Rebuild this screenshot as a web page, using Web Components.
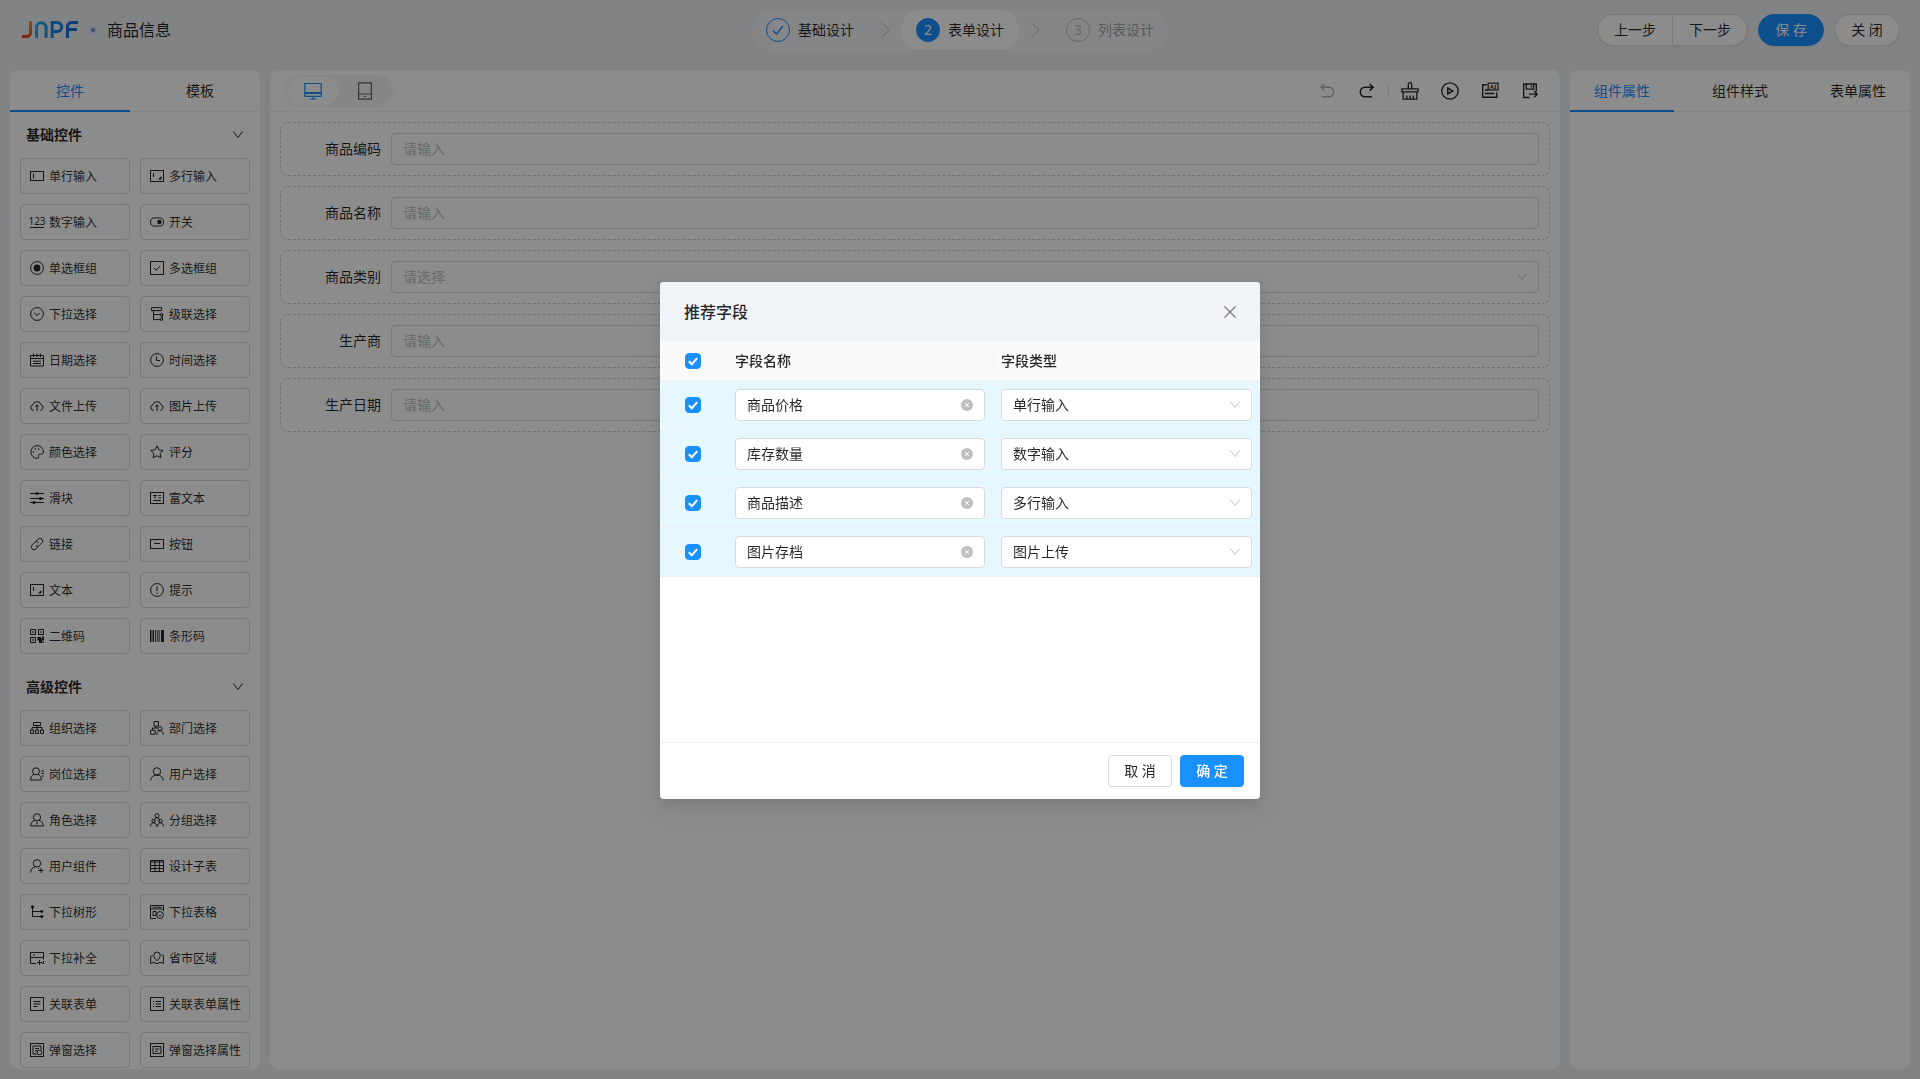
<!DOCTYPE html>
<html lang="zh-CN">
<head>
<meta charset="utf-8">
<title>商品信息</title>
<style>
  html, body { margin: 0; height: 100%; }
  body {
    --primary: #1890ff;
    --line: #d9d9d9;
    --split: #f0f0f0;
    --text: rgba(0, 0, 0, .85);
    --hint: #bfbfbf;
    --page: #ebeef2;
    font: 14px/22px "Noto Sans", "Noto Sans CJK SC", sans-serif;
    color: var(--text);
    background: var(--page);
    overflow: hidden;
  }
</style>
</head>
<body>
<design-app></design-app>

<script>
const define = (name, cls) => customElements.define(name, cls);

class Base extends HTMLElement {
  connectedCallback() {
    if (this.shadowRoot) return;
    const root = this.attachShadow({ mode: 'open' });
    root.innerHTML = `<style>
      *, ::before, ::after { box-sizing: border-box; }
      button, input, select { font: inherit; color: inherit; margin: 0; border-radius: 0; letter-spacing: normal; }
      button { cursor: pointer; background: none; border: 0; padding: 0; white-space: nowrap; }
      ${this.css()}
    </style>${this.html()}`;
  }
  css() { return ''; }
  html() { return ''; }
}

/* ---------- icons: [viewBox size, markup] ---------- */
const DOT = 'fill="currentColor" stroke="none"';
const ICONS = {
  input: [14, '<rect x=".5" y="2.5" width="13" height="9"/><path d="M3.5 4.5v5"/>'],
  textarea: [14, `<rect x=".5" y="1.5" width="13" height="11"/><path d="M3.5 4v4"/><path ${DOT} d="M11.5 7v3.5H8z"/>`],
  number: [14, '<text x="7" y="9.5" text-anchor="middle" font-size="10" fill="currentColor" stroke="none" font-family="Liberation Sans Narrow, Noto Sans">123</text><path d="M0 12.5h14"/>'],
  toggle: [14, `<rect x=".5" y="2.9" width="13" height="8.2" rx="4.1"/><circle cx="9.4" cy="7" r="2.2" ${DOT}/>`],
  radio: [14, `<circle cx="7" cy="7" r="6.4"/><circle cx="7" cy="7" r="3.4" ${DOT}/>`],
  checkbox: [14, '<rect x=".5" y=".5" width="13" height="13"/><path d="M4 7l2.2 2.2L10.2 5"/>'],
  select: [14, '<circle cx="7" cy="7" r="6.4"/><path d="M4.2 5.8L7 8.6l2.8-2.8"/>'],
  cascade: [14, `<path d="M1.5.6h10v3h-10zM3.5 3.6v9h7M3.5 7.6h7M12.4 7v5.5"/><circle cx="11.4" cy="7.6" r="1.3"/><circle cx="11.4" cy="12.2" r="1.3"/>`],
  date: [14, '<path d="M.5 2.5h13v10.500H.5zM.5 5.500h13M3.500.5v3.500M7 .5v3.500M10.500 .5v3.500M3 8.200h8M3 10.500h8"/>'],
  time: [14, '<circle cx="7" cy="7" r="6.4"/><path d="M6.500 3.300v4.200h3.500"/>'],
  upload: [14, '<path d="M4 11.300H3.300A2.800 2.800 0 0 1 2.900 5.800 4.200 4.200 0 0 1 11 5.700a2.900 2.900 0 0 1-.4 5.600H10M7 12V6M5.200 7.600L7 5.800l1.800 1.800"/>'],
  palette: [14, `<path d="M7 .6a6.400 6.400 0 1 0 .6 12.800c1.500-.2.800-1.700.7-2.600-.1-1.300 1.100-1.900 2.500-1.700 1.500.2 2.600-.3 2.600-2.100A6.400 6.400 0 0 0 7 .6z"/><circle cx="3.400" cy="7" r=".8" ${DOT}/><circle cx="5.200" cy="4" r=".8" ${DOT}/><circle cx="8.800" cy="4" r=".8" ${DOT}/>`],
  star: [14, '<path d="M7 .9l1.900 3.900 4.300.6-3.100 3 .7 4.300L7 10.700l-3.800 2 .7-4.300-3.100-3 4.300-.6z"/>'],
  slider: [14, `<path d="M0 2.500h14M0 7.500h14M0 11.500h14"/><circle cx="7" cy="2.500" r="1.600" ${DOT}/><circle cx="10.500" cy="7.500" r="1.600" ${DOT}/><circle cx="4" cy="11.500" r="1.600" ${DOT}/>`],
  rich: [14, '<rect x=".5" y="1.500" width="13" height="11"/><path d="M3 4.500h4M5 4.500v3M8.500 4.500H11M8.500 6.800H11M3 9.500h8"/>'],
  link: [14, '<path d="M6 4.200l2.300-2.300a2.700 2.700 0 0 1 3.800 3.800L9.300 8.500a2.700 2.700 0 0 1-3.600.2M8 9.800l-2.300 2.300a2.700 2.700 0 0 1-3.800-3.800L4.700 5.500a2.700 2.700 0 0 1 3.600-.2"/>'],
  button: [14, '<rect x=".5" y="2.500" width="13" height="9"/><path d="M4 6.500h6"/>'],
  alert: [14, `<circle cx="7" cy="7" r="6.400"/><path d="M7 3.300v5"/><circle cx="7" cy="10.200" r=".7" ${DOT}/>`],
  qr: [14, `<path d="M.5.5h5v5h-5zM8.500.5h5v5h-5zM.5 8.500h5v5h-5z"/><path ${DOT} d="M2.300 2.300h1.500v1.500H2.300zM10.300 2.300h1.500v1.500h-1.500zM2.300 10.300h1.500v1.500H2.300zM7.500 8h3.500v3.500H7.500zM11 9.500h1V7.500h2V11.500h-3zM9 11h3v3H9zM12.500 12.500H14V14h-1.500z"/>`],
  barcode: [14, `<path ${DOT} d="M0 1h1.500v12H0zM2.500 1H4v12H2.500zM5 1h.8v12H5zM6.800 1h.8v12h-.8zM8.600 1h1v12h-1zM11 1h3v12h-3z"/>`],
  org: [14, '<path d="M3.500 1.500h7v3h-7zM7 4.500V9M2 9V6.500h10V9M.5 9h3v3.500h-3zM5.500 9h3v3.500h-3zM10.500 9h3v3.500h-3z"/>'],
  dept: [14, '<path d="M4 .6h4.500v4.500H4zM6 5.100v2M2.500 9V7h5M.6 9.200h4.600v4H.6z"/><circle cx="10" cy="7.600" r="2"/><path d="M6.900 13.600c0-2.500 1.200-3.900 3.100-3.900s3.300 1.400 3.300 3.900"/>'],
  post: [14, '<circle cx="6" cy="4.300" r="3.500"/><path d="M4 7.300C1.800 8.400.6 10.200.6 13h10.800c0-2.800-1-4.600-3.200-5.700M11 4h3M11.500 6.500H14M12 9h2"/>'],
  user: [14, '<circle cx="7" cy="4.400" r="3.700"/><path d="M.7 13.500C1 9.900 3.300 8.100 7 8.100s6 1.800 6.300 5.400"/>'],
  role: [14, '<circle cx="7" cy="4.300" r="3.600"/><path d="M4.800 7.400C2 8.300.7 10.300.7 13h12.600c0-2.700-1.300-4.700-4.100-5.600M7 9v2.500"/>'],
  group: [14, '<circle cx="7" cy="2.700" r="2.100"/><path d="M4.500 7.500C4.500 5.700 5.500 4.800 7 4.800s2.500.9 2.500 2.700"/><circle cx="3.500" cy="8" r="1.700"/><circle cx="10.500" cy="8" r="1.700"/><path d="M.6 13.500c0-2.400 1.100-3.700 2.900-3.700s2.900 1.300 2.900 3.700M7.600 13.500c0-2.400 1.100-3.700 2.900-3.700s2.900 1.300 2.900 3.700"/>'],
  useradd: [14, '<circle cx="7" cy="4.300" r="3.700"/><path d="M.7 13.500C.9 10.500 2.300 8.600 5 8M8 9.200h1M11 9v5M8.500 11.500h5"/>'],
  table: [14, '<path d="M.5 1.500h13v11H.5zM.5 3h13M.5 6.500h13M.5 9.500h13M5 2v10.500M9.500 2v10.500"/>'],
  tree: [14, `<path d="M2.500 2v9.500H12M2.500 6.500H12"/><circle cx="2.500" cy="1.800" r="1.600" ${DOT}/><circle cx="11.800" cy="6.500" r="1.400" ${DOT}/><circle cx="11.800" cy="11.500" r="1.600" ${DOT}/>`],
  poptable: [14, '<path d="M13.500 6V.5H.5v13H6M.5 4h13M3 6.500h3v4H3zM2.500 2.300h9"/><circle cx="10" cy="10" r="3.400"/><path d="M8.500 9.600l1.500 1.500 1.500-1.500"/>'],
  complete: [14, '<path d="M13.500 6.500v-5H.5v5h13M.5 6.500v6H6M3 4h2M9.500 9v5M7 11.500h5M13.500 6.500v2M12 12.500h1.500V10"/>'],
  area: [14, '<path d="M7 9.800C4.800 7.600 3.800 6 3.800 4.200a3.200 3.200 0 0 1 6.400 0C10.200 6 9.200 7.600 7 9.800zM2.800 4.500L.6 5.500v7l3.400-1.200 3 1.600 3-1.600 3.400 1.200v-8l-2-.8"/>'],
  relform: [14, '<rect x=".5" y=".5" width="13" height="13"/><path d="M3.500 4.500h7M3.500 7h7M3.500 9.500h4"/>'],
  relattr: [14, '<rect x=".5" y=".5" width="13" height="13"/><path d="M3 4.500h1M5.500 4.500H11M3 7h1M5.500 7H11M3 9.500h1M5.500 9.500H11"/>'],
  popup: [14, '<rect x=".5" y=".5" width="13" height="13"/><path d="M11 7V3H3v8h4M5 5.500h4M5 7.800h2.500"/><circle cx="9.500" cy="9.500" r="2.300"/>'],
  popattr: [14, '<rect x=".5" y=".5" width="13" height="13"/><path d="M3 3.500h8v7H3zM5 6h4.500M5 8.300h2.500"/>'],
  down: [12, '<path d="M1.300 2.500L6 8.500l4.700-6"/>'],
  next: [18, '<path d="M5 1l8 8-8 8"/>'],
  tick: [14, '<path stroke-width="1.300" d="M2 7.500L5.500 11 12 3"/>'],
  close: [16, '<path stroke-width="1.200" d="M2.500 2.500l11 11M13.500 2.500l-11 11"/>'],
  clear: [12, '<circle cx="6" cy="6" r="6" fill="currentColor" stroke="none"/><path stroke="#fff" d="M4 4l4 4M8 4l-4 4"/>'],
  undo: [18, '<path stroke-width="1.400" d="M6.300 2L3 5.300l3.300 3.300M3 5.300h8a4.700 4.700 0 0 1 0 9.400H4"/>'],
  redo: [18, '<path stroke-width="1.600" d="M11.700 2L15 5.300l-3.300 3.300M15 5.300H7a4.700 4.700 0 0 0 0 9.400h7"/>'],
  brush: [18, '<path stroke-width="1.300" d="M7.300 6.500V2.400a1.700 1.700 0 0 1 3.400 0v4.100M.9 6.800h16.200v3H.9zM2.200 9.800v7.400h13.600V9.800M5.800 13.500v3.500M9 13.500v3.500M12.200 13.500v3.500"/>'],
  play: [18, '<circle cx="9" cy="9" r="8.200" stroke-width="1.300"/><path stroke-width="1.500" d="M6.800 6v6l5-3z"/>'],
  ai: [18, '<path stroke-width="1.400" d="M6 2.800H1.700v12.500h14.100v-5M4 8h3M4 11.500h9.500"/><rect x="7.200" y="1.200" width="9.800" height="6.800" stroke-width="1.200"/><text x="12.100" y="6.900" text-anchor="middle" font-size="6" font-weight="700" fill="currentColor" stroke="none" font-family="Noto Sans">AI</text>'],
  savefile: [18, '<path stroke-width="1.300" d="M8.500 15.500H2.700V2h12.600v7.500M5.300 2v5.200h7.400V2M10.500 3.500v2M8 12.200h8M13.200 9l3.100 3.200-3.100 3.100"/>'],
  pc: [18, '<path stroke-width="1.200" d="M.8 1.500h16.400v12.800H.8zM9 14.300V17M5.500 17h7"/><path stroke-width="2" d="M.8 11h16.400"/>'],
  pad: [18, '<path stroke-width="1.200" d="M2.600.8h12.800v16.400H2.600zM2.600 12h12.800M8 14.500h2"/>']
};

define('ui-icon', class extends Base {
  css() {
    return `:host { display: inline-flex; flex: none; }
      svg { display: block; overflow: visible; fill: none; stroke: currentColor; stroke-width: 1; }`;
  }
  html() {
    const [box, body] = ICONS[this.getAttribute('name')];
    const size = this.getAttribute('size') || box;
    return `<svg width="${size}" height="${size}" viewBox="0 0 ${box} ${box}" aria-hidden="true">${body}</svg>`;
  }
});

/* ---------- small controls ---------- */
define('ui-button', class extends Base {
  css() {
    return `:host { display: inline-flex; }
      button { height: 32px; min-width: 64px; padding: 0 15px; border: 1px solid var(--line); border-radius: 4px;
        background: #fff; box-shadow: 0 2px 0 rgba(0,0,0,.02); }
      :host([primary]) button { background: var(--primary); border-color: var(--primary); color: #fff; box-shadow: 0 2px 0 rgba(0,0,0,.045); }
      :host([strong]) button { font-weight: 500; }
      :host([round]) button { border-radius: 16px; min-width: 66px; padding: 0 16px; }
      :host([first]) button { border-radius: 16px 0 0 16px; padding: 0 16px; }
      :host([last]) button { border-radius: 0 16px 16px 0; border-left: 0; padding: 0 16px; }`;
  }
  html() { return '<button type="button"><slot></slot></button>'; }
});

define('text-field', class extends Base {
  css() {
    return `:host { display: block; flex: 1; min-width: 0; }
      .box { display: flex; align-items: center; height: 32px; padding: 0 11px; border: 1px solid var(--line); border-radius: 4px; background: #fff; }
      input { flex: 1; min-width: 0; height: 22px; padding: 0; border: 0; outline: 0; background: none; }
      input::placeholder { color: var(--hint); opacity: 1; }
      button { display: flex; color: #bfbfbf; }`;
  }
  html() {
    const v = this.getAttribute('value') || '', p = this.getAttribute('placeholder') || '';
    return `<div class="box"><input type="text" aria-label="${this.getAttribute('label')}" value="${v}" placeholder="${p}">
      ${this.hasAttribute('clearable') ? '<button type="button" aria-label="清除"><ui-icon name="clear"></ui-icon></button>' : ''}</div>`;
  }
});

define('select-field', class extends Base {
  css() {
    return `:host { display: block; flex: 1; min-width: 0; }
      .box { display: grid; align-items: center; }
      select, ui-icon { grid-area: 1 / 1; }
      select { appearance: none; width: 100%; height: 32px; padding: 0 11px; border: 1px solid var(--line); border-radius: 4px; background: #fff; outline: 0; }
      :host([empty]) select { color: var(--hint); }
      ui-icon { justify-self: end; margin-right: 11px; color: var(--hint); pointer-events: none; }`;
  }
  html() {
    return `<div class="box"><select aria-label="${this.getAttribute('label')}"><option>${this.getAttribute('value')}</option></select><ui-icon name="down"></ui-icon></div>`;
  }
});

define('check-box', class extends Base {
  css() {
    return `:host { display: inline-flex; vertical-align: middle; }
      label { display: grid; place-items: center; }
      input, svg { grid-area: 1 / 1; }
      input { appearance: none; width: 16px; height: 16px; border: 1px solid var(--line); border-radius: 4px; background: #fff; }
      input:checked { background: var(--primary); border-color: var(--primary); }
      svg { fill: none; stroke: #fff; stroke-width: 2; pointer-events: none; }`;
  }
  html() {
    return `<label><input type="checkbox" checked aria-label="${this.getAttribute('label')}"><svg width="16" height="16" viewBox="0 0 16 16"><path d="M3.800 8.200l3 3 5.400-6"/></svg></label>`;
  }
});

define('tab-bar', class extends Base {
  css() {
    return `:host { display: flex; flex: none; justify-content: space-between; height: 42px; box-shadow: inset 0 -1px var(--split); }
      button { height: 42px; min-width: var(--tab, 104px); }
      button[aria-selected=true] { color: var(--primary); box-shadow: inset 0 -2px var(--primary); }`;
  }
  html() {
    return this.getAttribute('items').split(',').map((t, i) =>
      `<button type="button" role="tab" aria-selected="${i === 0}">${t}</button>`).join('');
  }
});

/* ---------- header ---------- */
define('brand-logo', class extends Base {
  css() { return ':host { display: block; } svg { display: block; fill: none; stroke-width: 3; }'; }
  html() {
    return `<svg width="56" height="18" viewBox="0 0 56 18" role="img" aria-label="JNPF">
      <defs>
        <linearGradient id="o" gradientUnits="userSpaceOnUse" x1="8" y1="0" x2="3" y2="17"><stop stop-color="#ff9a12"/><stop offset="1" stop-color="#e23a12"/></linearGradient>
        <linearGradient id="b" gradientUnits="userSpaceOnUse" x1="13" y1="0" x2="56" y2="0"><stop stop-color="#25b4ee"/><stop offset=".5" stop-color="#1683e0"/><stop offset="1" stop-color="#1268d8"/></linearGradient>
      </defs>
      <path stroke="url(#o)" d="M8.500 0v11.500a4 4 0 0 1-4 4H0"/>
      <g stroke="url(#b)"><path d="M14.500 17V6.500a4.800 4.800 0 0 1 9.600 0V17"/>
      <path d="M30.200 17V1.500h5a4.500 4.500 0 0 1 0 9h-5"/>
      <path d="M45.500 17V5.500a4 4 0 0 1 4-4H56M45.500 8.500H55"/></g></svg>`;
  }
});

define('step-bar', class extends Base {
  css() {
    return `:host { display: block; }
      ol { display: flex; list-style: none; margin: 0; padding: 0; height: 40px; border-radius: 20px; background: #f3f5f8; }
      li { display: flex; align-items: center; gap: 8px; padding: 0 15px; border-radius: 20px; }
      .sep { width: 32px; padding: 0; justify-content: center; color: #bfbfbf; }
      .num { display: grid; place-items: center; width: 24px; height: 24px; border: 1px solid var(--hint); border-radius: 12px; }
      .done .num { color: var(--primary); border-color: var(--primary); }
      .now { background: #fff; }
      .now .num { color: #fff; background: var(--primary); border-color: var(--primary); }
      .wait { color: #a6a6a6; }
      .wait .num { color: #bfbfbf; }`;
  }
  html() {
    return `<ol><li class="done"><span class="num"><ui-icon name="tick"></ui-icon></span><span>基础设计</span></li>
      <li class="sep" aria-hidden="true"><ui-icon name="next"></ui-icon></li>
      <li class="now"><span class="num">2</span><span>表单设计</span></li>
      <li class="sep" aria-hidden="true"><ui-icon name="next"></ui-icon></li>
      <li class="wait"><span class="num">3</span><span>列表设计</span></li></ol>`;
  }
});

define('app-header', class extends Base {
  css() {
    return `:host { display: grid; grid-template-columns: 1fr auto 1fr; align-items: center; height: 60px; padding: 0 20px; }
      .left, .right { display: flex; align-items: center; }
      .left { padding-left: 2px; }
      .dot { width: 4px; height: 4px; margin: 0 12px 0 13px; border-radius: 2px; background: #5b8ff0; box-shadow: 0 0 0 2px #dce4f6; }
      h1 { margin: 0; font-size: 16px; line-height: 24px; font-weight: 400; }
      .right { justify-content: flex-end; gap: 10px; }
      .group { display: flex; }`;
  }
  html() {
    return `<div class="left"><brand-logo></brand-logo><span class="dot"></span><h1>商品信息</h1></div>
      <step-bar></step-bar>
      <div class="right"><div class="group"><ui-button first>上一步</ui-button><ui-button last>下一步</ui-button></div>
      <ui-button round primary>保 存</ui-button><ui-button round>关 闭</ui-button></div>`;
  }
});

/* ---------- left palette ---------- */
define('widget-item', class extends Base {
  css() {
    return `:host { display: block; min-width: 0; }
      button { display: flex; align-items: center; gap: 5px; width: 100%; height: 36px; padding: 0 9px; border: 1px solid var(--line); border-radius: 4px; font-size: 12px; line-height: 21px; overflow: hidden; }`;
  }
  html() { return `<button type="button"><ui-icon name="${this.getAttribute('icon')}"></ui-icon><span><slot></slot></span></button>`; }
});

define('widget-group', class extends Base {
  css() {
    return `:host { display: block; padding: 0 10px 10px; }
      h2 { display: flex; align-items: center; justify-content: space-between; height: 46px; margin: 0; padding: 0 6px; font-size: 14px; font-weight: 700; }
      .grid { display: grid; grid-template-columns: 1fr 1fr; gap: 10px; }`;
  }
  html() { return `<h2>${this.getAttribute('label')}<ui-icon name="down"></ui-icon></h2><div class="grid"><slot></slot></div>`; }
});

const BASIC = [['input','单行输入'],['textarea','多行输入'],['number','数字输入'],['toggle','开关'],['radio','单选框组'],['checkbox','多选框组'],
  ['select','下拉选择'],['cascade','级联选择'],['date','日期选择'],['time','时间选择'],['upload','文件上传'],['upload','图片上传'],
  ['palette','颜色选择'],['star','评分'],['slider','滑块'],['rich','富文本'],['link','链接'],['button','按钮'],['textarea','文本'],['alert','提示'],
  ['qr','二维码'],['barcode','条形码']];
const ADVANCED = [['org','组织选择'],['dept','部门选择'],['post','岗位选择'],['user','用户选择'],['role','角色选择'],['group','分组选择'],
  ['useradd','用户组件'],['table','设计子表'],['tree','下拉树形'],['poptable','下拉表格'],['complete','下拉补全'],['area','省市区域'],
  ['relform','关联表单'],['relattr','关联表单属性'],['popup','弹窗选择'],['popattr','弹窗选择属性']];

define('widget-panel', class extends Base {
  css() {
    return `:host { display: flex; flex-direction: column; min-height: 0; overflow: hidden; border-radius: 8px; background: #fff; }
      tab-bar { --tab: 120px; }
      .scroll { flex: 1; min-height: 0; overflow-y: auto; scrollbar-width: none; }`;
  }
  html() {
    const list = a => a.map(([i, t]) => `<widget-item icon="${i}">${t}</widget-item>`).join('');
    return `<tab-bar items="控件,模板"></tab-bar><div class="scroll">
      <widget-group label="基础控件">${list(BASIC)}</widget-group>
      <widget-group label="高级控件">${list(ADVANCED)}</widget-group></div>`;
  }
});

/* ---------- canvas ---------- */
define('canvas-toolbar', class extends Base {
  css() {
    return `:host { display: flex; flex: none; align-items: center; justify-content: space-between; height: 42px; padding: 0 21px 0 15px; border-bottom: 1px solid var(--split); }
      .seg { display: flex; padding: 2px; border-radius: 16px; background: #f5f5f5; }
      .seg button { display: grid; place-items: center; width: 52px; height: 28px; border-radius: 14px; color: rgba(0,0,0,.6); }
      .seg button.on { background: #fff; color: var(--primary); }
      .tools { display: flex; align-items: center; gap: 22px; }
      .tools button { display: flex; }
      .tools button:disabled { color: #b0b0b0; }
      .pair { display: flex; align-items: center; gap: 12px; }
      i { width: 1px; height: 15px; background: #e4e4e4; }`;
  }
  html() {
    const b = (n, l, x = '') => `<button type="button" aria-label="${l}" ${x}><ui-icon name="${n}"></ui-icon></button>`;
    return `<div class="seg">${b('pc', '电脑', 'class="on"')}${b('pad', '平板')}</div>
      <div class="tools">${b('undo', '撤销', 'disabled')}<div class="pair">${b('redo', '重做')}<i></i>${b('brush', '清空')}</div>
      ${b('play', '预览')}${b('ai', '智能')}${b('savefile', '另存')}</div>`;
  }
});

define('form-row', class extends Base {
  css() {
    return `:host { display: flex; align-items: center; gap: 10px; height: 54px; padding-right: 10px; border: 1px dashed #ccc; border-radius: 8px; box-sizing: border-box; }
      .label { width: 100px; text-align: right; }`;
  }
  html() {
    const l = this.getAttribute('label');
    return `<span class="label">${l}</span>` + (this.hasAttribute('select')
      ? `<select-field empty label="${l}" value="请选择"></select-field>`
      : `<text-field label="${l}" placeholder="请输入"></text-field>`);
  }
});

define('form-canvas', class extends Base {
  css() {
    return `:host { display: flex; flex-direction: column; min-width: 0; border-radius: 8px; background: #fff; }
      .rows { display: flex; flex-direction: column; gap: 10px; padding: 10px; }`;
  }
  html() {
    return `<canvas-toolbar></canvas-toolbar><div class="rows"><form-row label="商品编码"></form-row><form-row label="商品名称"></form-row>
      <form-row select label="商品类别"></form-row><form-row label="生产商"></form-row><form-row label="生产日期"></form-row></div>`;
  }
});

define('prop-panel', class extends Base {
  css() { return ':host { display: block; overflow: hidden; border-radius: 8px; background: #fff; }'; }
  html() { return '<tab-bar items="组件属性,组件样式,表单属性"></tab-bar>'; }
});

/* ---------- dialog ---------- */
define('field-dialog', class extends Base {
  css() {
    return `:host { position: fixed; inset: 0; display: flex; align-items: center; justify-content: center; padding-top: 2px; background: rgba(0,0,0,.45); }
      section { width: 600px; overflow: hidden; border-radius: 4px; background: #fff;
        box-shadow: 0 3px 6px -4px rgba(0,0,0,.12), 0 6px 16px rgba(0,0,0,.08), 0 9px 28px 8px rgba(0,0,0,.05); }
      header { display: flex; align-items: center; justify-content: space-between; height: 60px; padding: 0 22px 0 24px; background: #f0f3f8; }
      h2 { margin: 0; font-size: 16px; line-height: 24px; font-weight: 500; }
      header button { display: flex; color: rgba(0,0,0,.5); }
      .body { height: 400px; }
      table { width: 100%; border-collapse: separate; border-spacing: 0; table-layout: fixed; }
      th, td { padding: 8px; border-bottom: 1px solid var(--split); text-align: left; vertical-align: middle; }
      th { font-weight: 500; background: #fafafa; }
      th:first-child, td:first-child { width: 67px; padding: 0 0 0 25px; line-height: 0; }
      th:nth-child(2) { width: 266px; }
      .split span { display: block; margin-left: -8px; padding-left: 8px; box-shadow: inset 1px 0 var(--split); }
      td { background: #e6f7ff; }
      footer { display: flex; justify-content: flex-end; gap: 8px; padding: 12px 16px; border-top: 1px solid var(--split); }`;
  }
  html() {
    const rows = [['商品价格', '单行输入'], ['库存数量', '数字输入'], ['商品描述', '多行输入'], ['图片存档', '图片上传']];
    return `<section role="dialog" aria-label="推荐字段">
      <header><h2>推荐字段</h2><button type="button" aria-label="关闭"><ui-icon name="close"></ui-icon></button></header>
      <div class="body"><table><thead><tr><th><check-box label="全选"></check-box></th><th>字段名称</th><th class="split"><span>字段类型</span></th></tr></thead>
      <tbody>${rows.map(([n, t]) => `<tr><td><check-box label="${n}"></check-box></td>
        <td><text-field clearable label="字段名称" value="${n}"></text-field></td>
        <td><select-field label="字段类型" value="${t}"></select-field></td></tr>`).join('')}</tbody></table></div>
      <footer><ui-button>取 消</ui-button><ui-button primary strong>确 定</ui-button></footer></section>`;
  }
});

define('design-app', class extends Base {
  css() {
    return `:host { display: flex; flex-direction: column; height: 100vh; }
      main { flex: 1; min-height: 0; display: grid; grid-template: minmax(0, 1fr) / 250px minmax(0, 1fr) 340px; gap: 10px; padding: 10px; }`;
  }
  html() {
    return `<app-header></app-header><main><widget-panel></widget-panel><form-canvas></form-canvas><prop-panel></prop-panel></main>
      <field-dialog></field-dialog>`;
  }
});
</script>
</body>
</html>
